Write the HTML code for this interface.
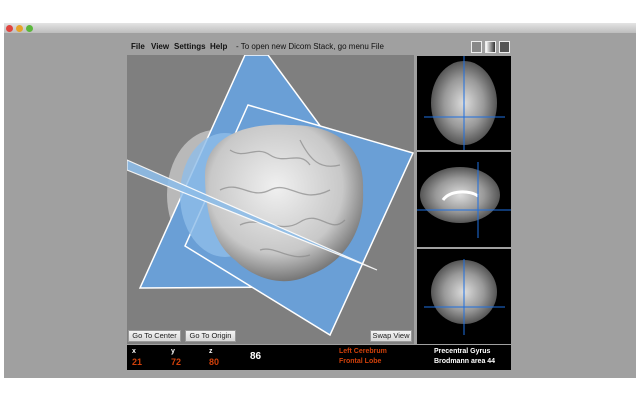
<!DOCTYPE html>
<html><head><meta charset="utf-8"><style>
*{margin:0;padding:0;box-sizing:border-box}
body{width:640px;height:400px;background:#fff;position:relative;overflow:hidden;font-family:"Liberation Sans",sans-serif}
.abs{position:absolute}
.win{left:4px;top:23px;width:632px;height:355px;background:#a0a0a0}
.tb{left:4px;top:23px;width:632px;height:10px;background:linear-gradient(#e4e4e4,#bdbdbd)}
.dot{width:7px;height:7px;border-radius:50%;top:24.5px}
.menu{top:42px;font-size:8px;color:#111;font-weight:bold;white-space:nowrap}
.btn{top:330px;height:12px;background:linear-gradient(#f4f4f4,#d8d8d8);border:1px solid #999;font-size:7.5px;color:#222;text-align:center;line-height:10px}
.t{font-size:7px;font-weight:bold;white-space:nowrap}
.r{color:#d0400a;font-size:9px}
</style></head><body>
<div class="abs win"></div>
<div class="abs tb"></div>
<div class="abs dot" style="left:6px;background:#e0443e"></div>
<div class="abs dot" style="left:16px;background:#e6a42a"></div>
<div class="abs dot" style="left:26px;background:#5ab73c"></div>
<div class="abs menu" style="left:131px">File</div>
<div class="abs menu" style="left:151px">View</div>
<div class="abs menu" style="left:174px">Settings</div>
<div class="abs menu" style="left:210px">Help</div>
<div class="abs menu" style="left:236px;font-weight:normal">- To open new Dicom Stack, go menu File</div>
<div class="abs" style="left:471px;top:41px;width:11px;height:12px;background:#888;border:1px solid #eee"></div>
<div class="abs" style="left:485px;top:41px;width:11px;height:12px;background:linear-gradient(90deg,#fff,#333);border:1px solid #eee"></div>
<div class="abs" style="left:499px;top:41px;width:11px;height:12px;background:#555;border:1px solid #eee"></div>
<svg class="abs" style="left:127px;top:55px" width="287" height="289" viewBox="127 55 287 289">
<defs>
<radialGradient id="g" cx="0.45" cy="0.4" r="0.6"><stop offset="0" stop-color="#f0f0f0"/><stop offset="0.7" stop-color="#c8c8c8"/><stop offset="1" stop-color="#777"/></radialGradient>
<radialGradient id="s" cx="0.5" cy="0.5" r="0.5"><stop offset="0" stop-color="#ddd"/><stop offset="0.6" stop-color="#999"/><stop offset="1" stop-color="#555"/></radialGradient>
</defs>
<rect x="127" y="55" width="287" height="289" fill="#7f7f7f"/>
<ellipse cx="215" cy="195" rx="48" ry="65" fill="#b9b9b9"/>
<polygon points="245,55 268,55 360,180 282,287 140,288" fill="#6a9fd6" stroke="#fff" stroke-width="1.5"/>
<polygon points="248,105 413,153 330,335 185,246" fill="#6a9fd6" stroke="#fff" stroke-width="1.5"/>
<ellipse cx="225" cy="195" rx="45" ry="62" fill="#8ebde8" opacity="0.8"/>
<path d="M205,175 C205,140 240,122 290,125 C340,125 365,150 363,190 C365,230 345,262 310,275 C280,290 250,275 235,260 C215,245 205,215 205,175Z" fill="url(#g)"/>
<g stroke="#8a8a8a" stroke-width="1.3" fill="none" opacity="0.7">
<path d="M230,150 C245,160 255,145 270,155 S300,150 310,165"/>
<path d="M220,190 C240,180 250,200 270,190 S300,205 330,190"/>
<path d="M240,225 C260,215 280,235 300,222 S330,235 345,220"/>
<path d="M300,140 C310,160 320,170 340,165"/>
<path d="M260,250 C275,245 290,262 310,255"/>
</g>
<polygon points="127,160 377,270 127,170" fill="#8ebde8" stroke="#fff" stroke-width="1.2" opacity="0.9"/>
</svg>
<div class="abs btn" style="left:128px;width:53px">Go To Center</div>
<div class="abs btn" style="left:185px;width:51px">Go To Origin</div>
<div class="abs btn" style="left:370px;width:42px">Swap View</div>
<svg class="abs" style="left:416px;top:55px" width="96" height="289" viewBox="416 55 96 289">
<rect x="416" y="55" width="96" height="289" fill="#a0a0a0"/>
<rect x="417" y="56" width="94" height="94" fill="#000"/>
<rect x="417" y="152" width="94" height="95" fill="#000"/>
<rect x="417" y="249" width="94" height="95" fill="#000"/>
<ellipse cx="464" cy="103" rx="33" ry="42" fill="url(#s)"/>
<ellipse cx="460" cy="195" rx="40" ry="28" fill="url(#s)"/>
<ellipse cx="464" cy="292" rx="33" ry="32" fill="url(#s)"/>
<path d="M443,200 C450,190 470,190 478,196" stroke="#fff" stroke-width="3" fill="none"/>
<g stroke="#1e6fe0" stroke-width="1">
<line x1="464" y1="56" x2="464" y2="150"/><line x1="424" y1="117" x2="505" y2="117"/>
<line x1="478" y1="162" x2="478" y2="238"/><line x1="417" y1="210" x2="511" y2="210"/>
<line x1="464" y1="259" x2="464" y2="335"/><line x1="424" y1="307" x2="505" y2="307"/>
</g>
</svg>
<div class="abs" style="left:127px;top:345px;width:384px;height:25px;background:#000"></div>
<div class="abs t" style="left:132px;top:348px;color:#fff">x</div>
<div class="abs t r" style="left:132px;top:357px">21</div>
<div class="abs t" style="left:171px;top:348px;color:#fff">y</div>
<div class="abs t r" style="left:171px;top:357px">72</div>
<div class="abs t" style="left:209px;top:348px;color:#fff">z</div>
<div class="abs t r" style="left:209px;top:357px">80</div>
<div class="abs t" style="left:250px;top:351px;color:#fff;font-size:10px">86</div>
<div class="abs t" style="left:339px;top:348px;color:#d0400a">Left Cerebrum</div>
<div class="abs t" style="left:339px;top:358px;color:#d0400a">Frontal Lobe</div>
<div class="abs t" style="left:434px;top:348px;color:#fff">Precentral Gyrus</div>
<div class="abs t" style="left:434px;top:358px;color:#fff">Brodmann area 44</div>
</body></html>
